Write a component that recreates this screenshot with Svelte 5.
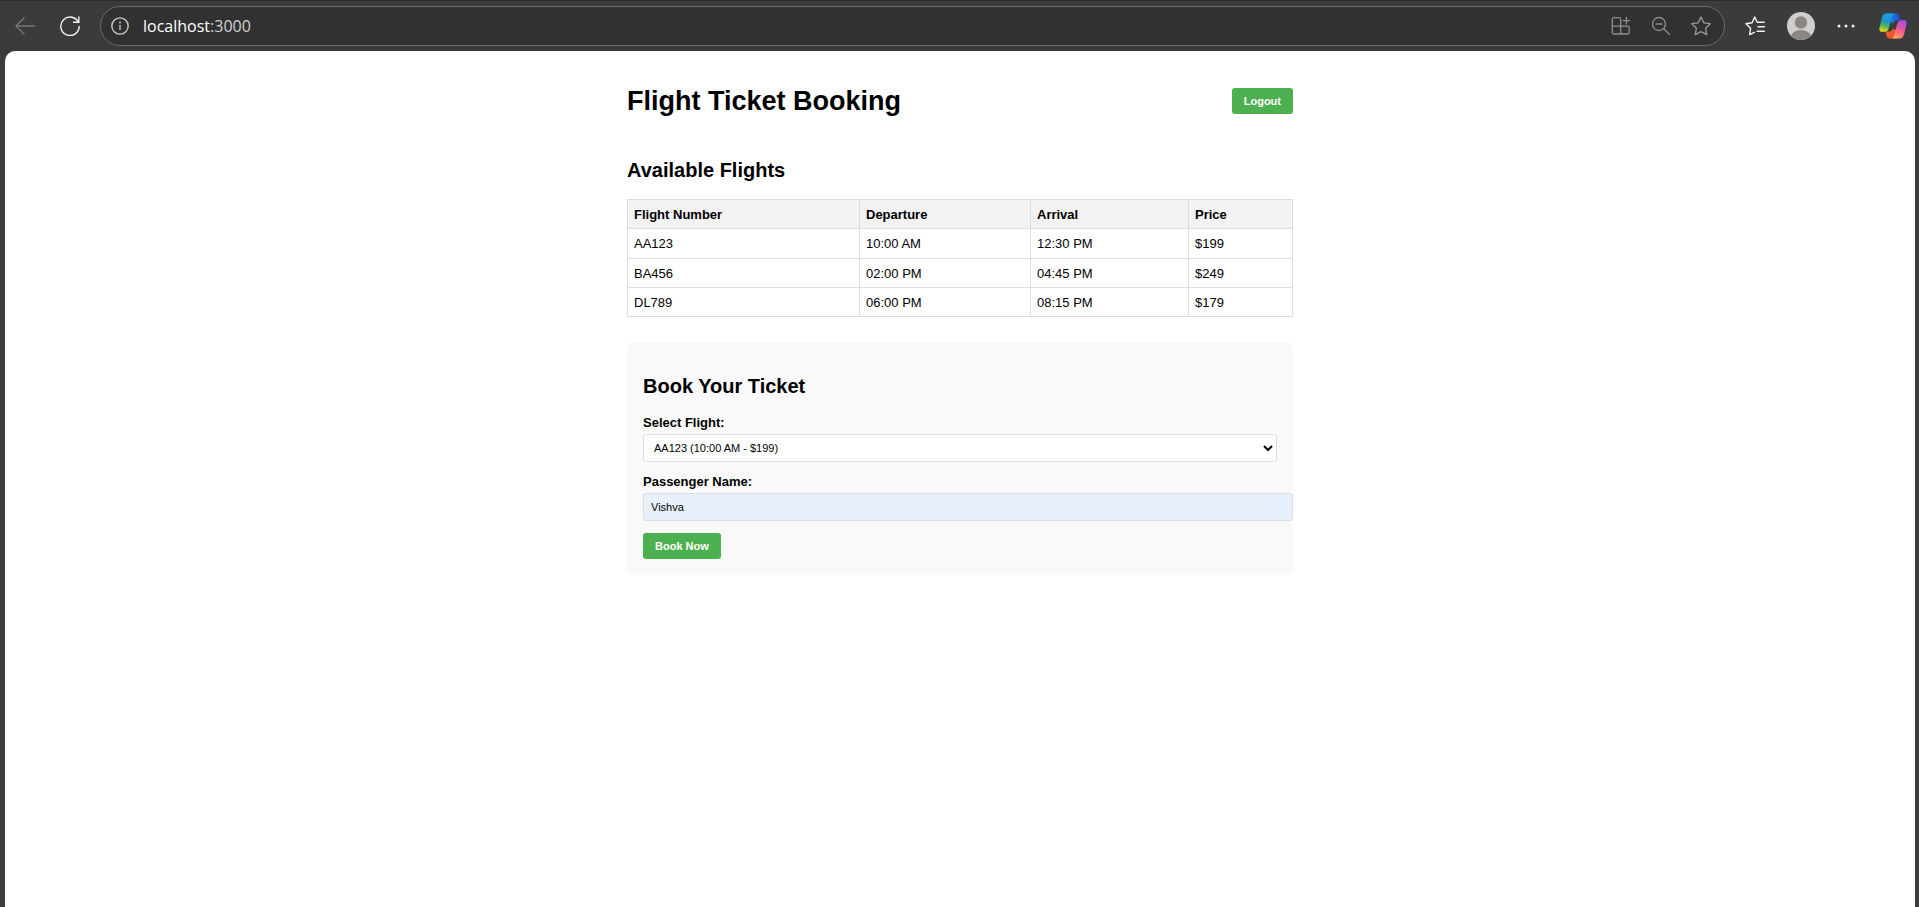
<script>
  const flights = [
    { number: 'AA123', departure: '10:00 AM', arrival: '12:30 PM', price: 199 },
    { number: 'BA456', departure: '02:00 PM', arrival: '04:45 PM', price: 249 },
    { number: 'DL789', departure: '06:00 PM', arrival: '08:15 PM', price: 179 }
  ];
  let selected = $state('AA123');
  let passenger = $state('Vishva');
</script>

<div class="browser">
  <nav class="toolbar" aria-label="Browser toolbar">
    <button class="tool" aria-label="Back" disabled>
      <svg width="20" height="20" viewBox="0 0 20 20" fill="none" stroke="#777" stroke-width="1.3"><path d="M20 10H1M9.5 1.5 1 10l8.500 8.500" /></svg>
    </button>
    <button class="tool reload" aria-label="Reload">
      <svg width="20" height="20" viewBox="0 0 20 20" fill="none" stroke="#f2f2f2" stroke-width="1.4"><path d="M18.600 7A9.200 9.200 0 1 0 19.200 10M18.800 0.500V6.200H13" /></svg>
    </button>
    <div class="address">
      <button class="tool" aria-label="Site information">
        <svg width="18" height="18" viewBox="0 0 18 18" fill="none" stroke="#d0d0d0" stroke-width="1.3"><circle cx="9" cy="9" r="8.200" /><path d="M9 8v5" /><circle cx="9" cy="5.500" r="0.900" fill="#d0d0d0" stroke="none" /></svg>
      </button>
      <div class="url">localhost<span>:3000</span></div>
      <button class="tool" aria-label="Install app">
        <svg width="20" height="20" viewBox="0 0 20 20" fill="none" stroke="#8f8f8f" stroke-width="1.300"><path d="M9.700 10.200V3.200a1.500 1.500 0 0 0-1.500-1.500H2.800a1.500 1.500 0 0 0-1.500 1.500v13.300A1.500 1.500 0 0 0 2.800 18h13.900a1.500 1.500 0 0 0 1.500-1.500v-4.800a1.500 1.500 0 0 0-1.500-1.500H1.300M9.700 10.200V18M15.400 1v7.400M11.700 4.700h7.400" /></svg>
      </button>
      <button class="tool" aria-label="Zoom out">
        <svg width="20" height="20" viewBox="0 0 20 20" fill="none" stroke="#8f8f8f" stroke-width="1.300" stroke-linecap="round"><circle cx="8" cy="8" r="6.500" /><path d="M5 8h6M12.700 12.700 18.500 18.500" /></svg>
      </button>
      <button class="tool" aria-label="Add to favorites">
        <svg width="20" height="20" viewBox="0 0 20 20" fill="none" stroke="#9a9a9a" stroke-width="1.300" stroke-linejoin="round"><path d="m10 1 2.800 5.800 6.400.9-4.600 4.500 1.100 6.400L10 15.600l-5.700 3 1.100-6.400L.8 7.700l6.400-.9Z" /></svg>
      </button>
    </div>
    <div class="actions">
      <button class="tool" aria-label="Favorites">
        <svg width="20" height="20" viewBox="0 0 20 20" fill="none" stroke="#f2f2f2" stroke-width="1.400" stroke-linejoin="round" stroke-linecap="round"><path d="M9.300 16.300 4.600 18.600l1-6.400L.9 7.700l6.200-.9L9.700 1l2.500 5.200M13 6.300h6.300M13 10.800h6.300M12 15.300h7.300" /></svg>
      </button>
      <button class="tool" aria-label="Profile">
        <svg width="28" height="28" viewBox="0 0 28 28"><defs><clipPath id="face"><circle cx="14" cy="14" r="14" /></clipPath></defs><g clip-path="url(#face)"><path fill="#d1cfcd" d="M0 0h28v28H0z" /><circle cx="14" cy="10.500" r="6.200" fill="#8b8683" /><ellipse cx="14" cy="24.500" rx="10" ry="6.500" fill="#8b8683" /></g></svg>
      </button>
      <button class="tool" aria-label="More">
        <svg width="18" height="18" viewBox="0 0 18 18" fill="#f2f2f2"><circle cx="2" cy="9" r="1.500" /><circle cx="9" cy="9" r="1.500" /><circle cx="16" cy="9" r="1.500" /></svg>
      </button>
      <button class="tool copilot" aria-label="Copilot">
        <svg width="28" height="26" viewBox="0 0 28 26">
          <defs>
            <linearGradient id="blue" x1="0" y1="0" x2="1" y2="0"><stop offset="0" stop-color="#2394e8" /><stop offset="1" stop-color="#1746c9" /></linearGradient>
            <linearGradient id="cool" x1="0.500" y1="0" x2="0.300" y2="1"><stop offset="0" stop-color="#189ff0" /><stop offset="0.450" stop-color="#1d96b8" /><stop offset="0.700" stop-color="#54b860" /><stop offset="1" stop-color="#f2d914" /></linearGradient>
            <linearGradient id="warm" x1="0.700" y1="0" x2="0.300" y2="1"><stop offset="0" stop-color="#a64de8" /><stop offset="0.450" stop-color="#e95599" /><stop offset="0.750" stop-color="#ff7868" /><stop offset="1" stop-color="#ffb36b" /></linearGradient>
          </defs>
          <path fill="url(#blue)" d="M8 .5h9.200c1.800 0 2.700 1.200 3.200 3L21.500 7.500h-3.700c-2.500 0-3.500 1.500-4 3.500L9 7Z" />
          <path fill="#f0562c" d="M19 18.500 18 25.500h-7.500c-1.800 0-2.600-1.200-3-2.800L6.500 18.500h4c2 0 3-1.400 3.500-3.300Z" />
          <path fill="url(#cool)" d="M7.500.5h8.300c-1.500 0-2.300 1.200-2.800 3L9.700 15.200c-.7 2.400-1.700 3.600-3.700 3.600H3C.8 18.800-.1 17 .5 14.500L3 4.500C3.700 2 5 .5 7.500.5Z" />
          <path fill="url(#warm)" d="M20.500 25.500h-8.300c1.500 0 2.300-1.200 2.800-3l3.300-11.700c.7-2.400 1.700-3.600 3.700-3.600h3c2.200 0 3.100 1.800 2.500 4.300l-2.500 10c-.7 2.500-2 4-4.500 4Z" />
        </svg>
      </button>
    </div>
  </nav>

  <div class="page">
    <main>
      <header>
        <h1>Flight Ticket Booking</h1>
        <button class="primary">Logout</button>
      </header>

      <section class="flights">
        <h2>Available Flights</h2>
        <table>
          <colgroup><col class="number" /><col class="departure" /><col class="arrival" /><col /></colgroup>
          <thead>
            <tr><th>Flight Number</th><th>Departure</th><th>Arrival</th><th>Price</th></tr>
          </thead>
          <tbody>
            {#each flights as flight}
              <tr><td>{flight.number}</td><td>{flight.departure}</td><td>{flight.arrival}</td><td>${flight.price}</td></tr>
            {/each}
          </tbody>
        </table>
      </section>

      <form onsubmit={(event) => event.preventDefault()}>
        <h2>Book Your Ticket</h2>
        <div class="field">
          <label for="flight">Select Flight:</label>
          <select id="flight" bind:value={selected}>
            {#each flights as flight}
              <option value={flight.number}>{flight.number} ({flight.departure} - ${flight.price})</option>
            {/each}
          </select>
        </div>
        <div class="field">
          <label for="passenger">Passenger Name:</label>
          <input id="passenger" type="text" bind:value={passenger} />
        </div>
        <button class="primary" type="submit">Book Now</button>
      </form>
    </main>
  </div>
</div>

<style>
  :global(body) {
    margin: 0;
    background: #3b3b3b;
  }

  .browser {
    display: flex;
    flex-direction: column;
    box-sizing: border-box;
    min-height: 100vh;
    padding: 0 4px 0 5px;
    border-top: 1px solid #2b2b2b;
    background: #3b3b3b;
  }

  .toolbar {
    display: flex;
    align-items: center;
    height: 50px;
    padding: 0 8px 0 10px;
  }

  .tool {
    display: flex;
    flex: none;
    padding: 0;
    border: 0;
    background: none;
  }

  .reload {
    margin: 0 20px 0 25px;
  }

  .address {
    display: flex;
    flex: 1;
    align-items: center;
    gap: 20px;
    box-sizing: border-box;
    height: 40px;
    padding: 0 13px 0 10px;
    border: 1px solid #6b6b6b;
    border-radius: 20px;
    background: #313131;
  }

  .url {
    flex: 1;
    margin-left: -6px;
    color: #fff;
    font: 16px/24px "Open Sans", "Noto Sans", sans-serif;
  }

  .url span {
    color: #d2d2d2;
  }

  .actions {
    display: flex;
    align-items: center;
    gap: 22px;
    margin-left: 20px;
  }

  .copilot {
    margin-left: 2px;
  }

  .page {
    flex: 1;
    padding: 34px 20px;
    border-radius: 10px 10px 0 0;
    background: #fff;
    color: #000;
    font: 13px/15px "Liberation Sans", Arial, sans-serif;
  }

  main {
    max-width: 666px;
    margin: 0 auto;
  }

  header {
    display: flex;
    align-items: center;
    justify-content: space-between;
    margin-bottom: 41px;
  }

  h1,
  h2 {
    margin: 0;
    font-weight: bold;
  }

  h1 {
    font-size: 27px;
    line-height: 32px;
  }

  h2 {
    margin-bottom: 17px;
    font-size: 20px;
    line-height: 24px;
  }

  .primary {
    height: 26px;
    padding: 0 12px;
    border: 0;
    border-radius: 3px;
    background: #4caf50;
    color: #fff;
    font: bold 11px/13px "Liberation Sans", Arial, sans-serif;
  }

  .flights {
    margin-bottom: 25px;
  }

  table {
    width: 100%;
    border-collapse: collapse;
    table-layout: fixed;
  }

  .number {
    width: 232px;
  }

  .departure {
    width: 171px;
  }

  .arrival {
    width: 158px;
  }

  th,
  td {
    padding: 7px 6px 6px;
    border: 1px solid #ddd;
    text-align: left;
  }

  th {
    background: #f2f2f2;
  }

  tbody tr:first-child td {
    padding-bottom: 7px;
  }

  form {
    padding: 32px 16px 16px;
    border-radius: 7px;
    background: #f9f9f9;
  }

  .field {
    margin-bottom: 12px;
  }

  label {
    display: block;
    margin-bottom: 4px;
    font-weight: bold;
  }

  select,
  input {
    display: block;
    width: 100%;
    border: 1px solid #ddd;
    border-radius: 3px;
    color: #000;
    font: 11px/14px "Liberation Sans", Arial, sans-serif;
  }

  select {
    box-sizing: border-box;
    height: 28px;
    padding: 0 6px;
    background-color: #fff;
  }

  /* Padding and border add to the full width, so the box runs past the form's inner edge. */
  input {
    box-sizing: content-box;
    height: 26px;
    padding: 0 7px;
    background: #e8f0fe;
  }
</style>
